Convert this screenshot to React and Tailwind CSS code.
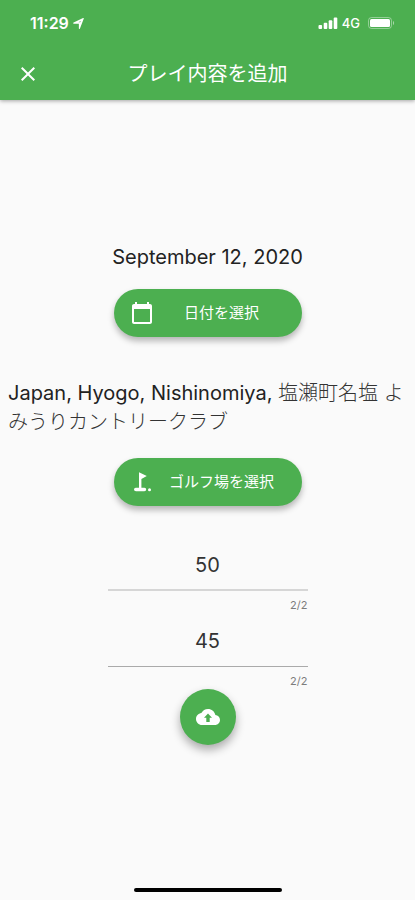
import React from "react";

function StatusBar() {
  return (
    <div className="flex h-[46px] items-center justify-between pr-5 pl-[30px]">
      <div className="flex items-center gap-1">
        <span className="text-base leading-5 font-semibold">11:29</span>
        <svg className="size-[11px]" viewBox="0 0 12 12" aria-hidden="true">
          <path
            fillRule="evenodd"
            fill="currentColor"
            d="M11.700.8 7.600 11.500a.6.6 0 0 1-1.200-.2V6.200H.9a.6.6 0 0 1-.2-1.200L11 .1a.5.5 0 0 1 .7.7ZM8.600 3.300 5.900 4.700h2Z"
          />
        </svg>
      </div>
      <div className="flex items-center gap-1">
        <svg className="h-3 w-5" viewBox="0 0 20 12" fill="currentColor" aria-hidden="true">
          <rect x="0.5" y="8" width="3.6" height="4" rx="1" />
          <rect x="5.7" y="5.8" width="3.6" height="6.2" rx="1" />
          <rect x="10.7" y="3.2" width="3.6" height="8.8" rx="1" />
          <rect x="15.7" y="0.4" width="3.6" height="11.6" rx="1" />
        </svg>
        <span className="text-[13px] leading-5 font-medium">4G</span>
        <svg className="ml-1 h-3 w-[27px]" viewBox="0 0 27 12" aria-hidden="true">
          <rect x="0.5" y="0.5" width="23" height="11" rx="3" fill="none" stroke="#fff" strokeOpacity="0.4" />
          <rect x="2" y="2" width="20" height="8" rx="1.5" fill="#fff" />
          <path d="M25 4c1.4.4 1.4 3.6 0 4Z" fill="#fff" fillOpacity="0.5" />
        </svg>
      </div>
    </div>
  );
}

function PillButton({ icon, children }) {
  return (
    <button
      type="button"
      className="flex h-12 w-[188px] items-center rounded-full bg-[#4caf50] pr-3 pl-4 text-white shadow-[0_4px_6px_rgba(0,0,0,0.28)]"
    >
      {icon}
      <span className="flex-1 text-center text-[15px] leading-5">{children}</span>
    </button>
  );
}

function ScoreField({ label, value, lineClass }) {
  const [text, setText] = React.useState(value);
  return (
    <div className="flex w-[200px] flex-col">
      <input
        aria-label={label}
        inputMode="numeric"
        maxLength={2}
        value={text}
        onChange={(e) => setText(e.target.value)}
        className={"h-[51px] w-full bg-transparent text-center text-xl text-[#333] outline-none " + lineClass}
      />
      <span className="mt-1.5 self-end text-[11px] leading-4 text-[#7c7c7c]">{text.length}/2</span>
    </div>
  );
}

const calendarIcon = (
  <svg className="size-6" viewBox="0 0 24 24" fill="currentColor" aria-hidden="true">
    <path d="M20 3h-1V1h-2v2H7V1H5v2H4c-1.100 0-2 .9-2 2v16c0 1.100.9 2 2 2h16c1.100 0 2-.9 2-2V5c0-1.100-.9-2-2-2zm0 18H4V8h16v13z" />
  </svg>
);

const golfIcon = (
  <svg className="size-6" viewBox="0 0 24 24" fill="currentColor" aria-hidden="true">
    <circle cx="19.5" cy="19.7" r="1.500" />
    <path d="M9 2.200 16.800 6.100 11.400 9V17.700H14.500Q16.200 17.800 16.200 19.400T14.300 21.200H6Q4 21.200 4 19.400T6 17.700H9Z" />
  </svg>
);

export default function App() {
  return (
    <div className="flex min-h-screen flex-col bg-[#fafafa] font-[Inter,'Noto_Sans_CJK_JP',sans-serif] text-[#222]">
      <header className="bg-[#4caf50] text-white shadow-[0_1px_4px_rgba(0,0,0,0.35)]">
        <StatusBar />
        <div className="grid h-[54px] grid-cols-[56px_1fr_56px] items-center">
          <button type="button" aria-label="閉じる" className="flex size-14 items-center justify-center">
            <svg className="size-6" viewBox="0 0 24 24" fill="currentColor" aria-hidden="true">
              <path d="M19 6.410 17.590 5 12 10.590 6.410 5 5 6.410 10.590 12 5 17.590 6.410 19 12 13.410 17.590 19 19 17.590 13.410 12z" />
            </svg>
          </button>
          <h1 className="text-center text-xl font-normal">プレイ内容を追加</h1>
        </div>
      </header>

      <main className="flex flex-1 flex-col items-center justify-center">
        <p className="text-xl leading-[29px]">September 12, 2020</p>
        <div className="mt-[17px]">
          <PillButton icon={calendarIcon}>日付を選択</PillButton>
        </div>
        <p className="mt-[42px] w-full px-2 text-xl leading-[29px]">
          Japan, Hyogo, Nishinomiya, <span className="font-light text-[#333]">塩瀬町名塩 よ</span>
          <span className="font-light text-[#333]">みうりカントリークラブ</span>
        </p>
        <div className="mt-[21px] mb-[34px]">
          <PillButton icon={golfIcon}>ゴルフ場を選択</PillButton>
        </div>
        <div className="flex flex-col gap-[3px]">
          <ScoreField label="前半スコア" value="50" lineClass="border-b-2 border-[#d6d6d6]" />
          <ScoreField label="後半スコア" value="45" lineClass="border-b border-[#aaa]" />
        </div>
        <button
          type="button"
          aria-label="アップロード"
          className="flex size-14 shrink-0 items-center justify-center rounded-full bg-[#4caf50] text-white shadow-[0_5px_10px_rgba(0,0,0,0.32)]"
        >
          <svg className="size-6" viewBox="0 0 24 24" fill="currentColor" aria-hidden="true">
            <path d="M19.350 10.040C18.670 6.590 15.640 4 12 4 9.110 4 6.600 5.640 5.350 8.040 2.340 8.360 0 10.910 0 14c0 3.310 2.690 6 6 6h13c2.760 0 5-2.240 5-5 0-2.640-2.050-4.780-4.650-4.960zM13.700 12.800v4.200h-3.400v-4.200H8l4-4.200 4 4.200z" />
          </svg>
        </button>
      </main>

      <footer className="flex h-3 justify-center">
        <div className="h-1 w-[148px] rounded-full bg-black" />
      </footer>
    </div>
  );
}
